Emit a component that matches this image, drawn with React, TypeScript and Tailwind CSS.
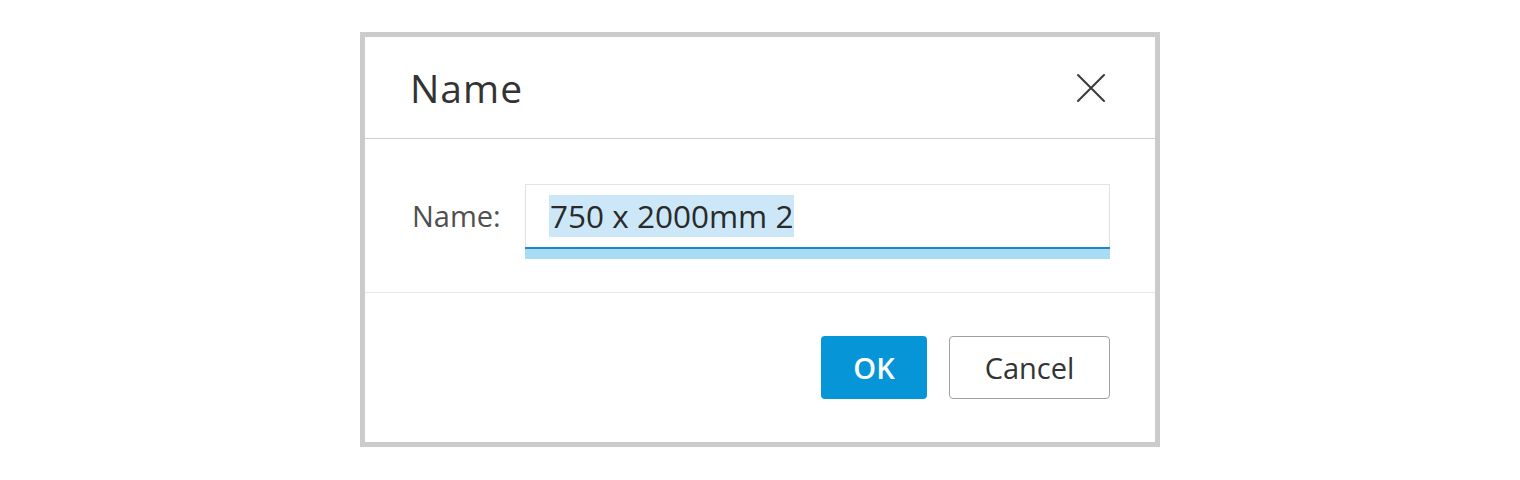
import React from "react";

export default function App() {
  return (
    <div className="w-[1520px] h-[480px] bg-white pt-[32px] pl-[360px]" style={{ fontFamily: '"Open Sans", "Noto Sans", sans-serif' }}>
      <div className="w-[800px] h-[415px] border-[5px] border-[#cbcbcb] bg-white flex flex-col">
        {/* Header */}
        <div className="h-[102px] border-b border-[#cfcfcf] flex items-center justify-between pl-[45px] pr-[49px]">
          <div className="text-[39px] text-[#333333] leading-none tracking-[1px]">Name</div>
          <svg width="30" height="30" viewBox="0 0 30 30" className="block">
            <path d="M2 2 L28 28 M28 2 L2 28" stroke="#3a3a3a" strokeWidth="2" strokeLinecap="round" />
          </svg>
        </div>
        {/* Body */}
        <div className="h-[154px] border-b border-[#e6e6e6] pt-[45px] pl-[45px]">
          <div className="flex items-start">
            <div className="h-[64px] flex items-center text-[29px] text-[#505050] w-[115px] pl-[2px]">Name:</div>
            <div className="flex flex-col w-[585px]">
              <div className="h-[63px] border border-[#e2e2e2] border-b-0 flex items-center pl-[23px]">
                <span className="bg-[#cce8f8] text-[31.5px] leading-[42px] text-[#2a2a2a] px-[1px]">750 x 2000mm 2</span>
              </div>
              <div className="h-[2px] bg-[#1f86c8]"></div>
              <div className="h-[10px] bg-[#a8dbf4]"></div>
            </div>
          </div>
        </div>
        {/* Footer */}
        <div className="flex-1 flex items-center justify-end pr-[45px] gap-[22px]">
          <button className="w-[106px] h-[63px] rounded-[4px] bg-[#0696d7] text-white text-[29px] font-semibold">OK</button>
          <button className="w-[161px] h-[63px] rounded-[4px] border border-[#a0a0a0] bg-white text-[#333333] text-[29px]">Cancel</button>
        </div>
      </div>
    </div>
  );
}
